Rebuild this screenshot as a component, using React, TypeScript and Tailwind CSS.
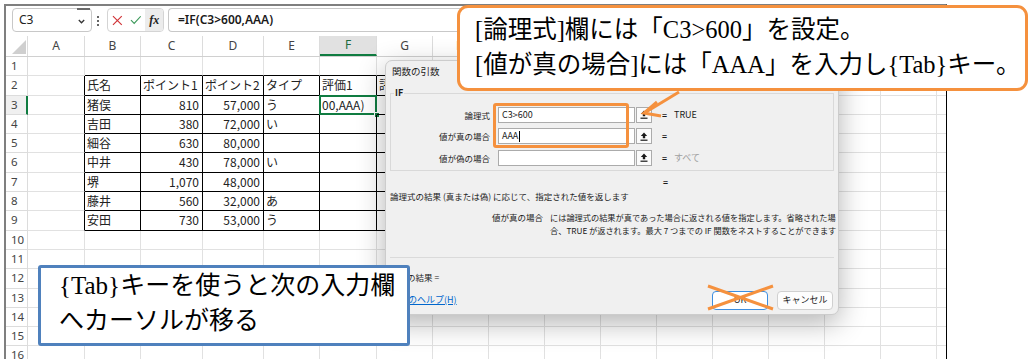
import clsx from 'clsx'

const cols = [
  { key: 'A', w: 'w-[57px]' },
  { key: 'B', w: 'w-[56px]' },
  { key: 'C', w: 'w-[62px]' },
  { key: 'D', w: 'w-[61px]' },
  { key: 'E', w: 'w-[56px]' },
  { key: 'F', w: 'w-[57px]' },
  { key: 'G', w: 'w-[56px]' },
  { key: 'H', w: 'w-[56px]' },
  { key: 'I', w: 'w-[56px]' },
  { key: 'J', w: 'w-[56px]' },
  { key: 'K', w: 'w-[56px]' },
  { key: 'L', w: 'w-[56px]' },
  { key: 'M', w: 'w-[56px]' },
  { key: 'N', w: 'w-[56px]' },
  { key: 'O', w: 'w-[56px]' },
  { key: 'P', w: 'w-[56px]' },
  { key: 'Q', w: 'w-[56px]' },
]

// B..G, rows 2-9
const data: Record<number, string[]> = {
  2: ['氏名', 'ポイント1', 'ポイント2', 'タイプ', '評価1', '評価2'],
  3: ['猪俣', '810', '57,000', 'う', '00,AAA)', ''],
  4: ['吉田', '380', '72,000', 'い', '', ''],
  5: ['細谷', '630', '80,000', '', '', ''],
  6: ['中井', '430', '78,000', 'い', '', ''],
  7: ['堺', '1,070', '48,000', '', '', ''],
  8: ['藤井', '560', '32,000', 'あ', '', ''],
  9: ['安田', '730', '53,000', 'う', '', ''],
}

const rows = Array.from({ length: 16 }, (_, i) => i + 1)

function inTable(row: number, col: number) {
  return row >= 2 && row <= 9 && col >= 1 && col <= 6
}

function UploadIcon() {
  return (
    <svg width="8" height="9" viewBox="0 0 8 9">
      <path d="M4 0.5 L0.8 4 H2.8 V6.2 H5.2 V4 H7.2 Z" fill="#1a1a1a" />
      <rect x="0.5" y="7.6" width="7" height="1.2" fill="#1a1a1a" />
    </svg>
  )
}

function ArgRow({ label, value, result, muted, caret }: { label: string; value: string; result: string; muted?: boolean; caret?: boolean }) {
  return (
    <div className="flex h-[21.5px] items-center">
      <div className="w-[99px] text-right">{label}</div>
      <div className="ml-[8px] flex h-[16px] w-[137px] items-center border border-[#ababab] bg-white pl-[3px] text-[9px]">
        {value}
        {caret && <span className="ml-px inline-block h-[11px] w-px bg-black" />}
      </div>
      <div className="ml-px flex h-[16px] w-[16px] items-center justify-center border border-[#ababab] bg-[#fbfbfb]">
        <UploadIcon />
      </div>
      <div className="ml-[10px] w-[8px] font-bold">=</div>
      <div className={clsx('ml-[4px] text-[9px]', muted ? 'text-[#a0a0a0]' : 'text-[#1b1b1b]')}>{result}</div>
    </div>
  )
}

export default function App() {
  return (
    <div className="relative h-[359px] w-[1030px] overflow-hidden bg-white font-['Noto_Sans_CJK_JP',sans-serif]">
      <div className="ml-[4px] mt-[4px] h-[355px] w-[943px] overflow-hidden border-l-2 border-r border-t-2 border-l-[#7f7f7f] border-r-black border-t-[#7f7f7f]">
        {/* formula bar */}
        <div className="flex h-[30px] items-start pt-[2px]">
          <div className="relative ml-[6px] flex h-[24px] w-[80px] shrink-0 items-center rounded-[4px] border border-[#c8c8c8] pl-[6px] font-['Noto_Sans',sans-serif] text-[12px] text-[#222]">
            C3
            <span className="absolute right-[1px] top-[-1px] h-[2px] w-[13px] bg-[#6a6a6a]" />
            <svg className="absolute right-[6px] top-[10px]" width="7" height="5" viewBox="0 0 7 5">
              <path d="M0.8 1 L3.5 3.8 L6.2 1" fill="none" stroke="#333" strokeWidth="1.3" />
            </svg>
          </div>
          <div className="ml-[5px] flex shrink-0 flex-col gap-[2px] pt-[8px]">
            <span className="h-[2px] w-[2px] rounded-full bg-[#333]" />
            <span className="h-[2px] w-[2px] rounded-full bg-[#333]" />
            <span className="h-[2px] w-[2px] rounded-full bg-[#333]" />
          </div>
          <div className="ml-[8px] flex h-[24px] w-[57px] shrink-0 items-center rounded-[4px] border border-[#d4d4d4]">
            <svg className="ml-[4px]" width="11" height="11" viewBox="0 0 11 11">
              <path d="M1 1 L10 10 M10 1 L1 10" stroke="#d13438" strokeWidth="1.2" />
            </svg>
            <svg className="ml-[7px]" width="12" height="10" viewBox="0 0 12 10">
              <path d="M1 5.2 L4.3 8.6 L11 1.2" fill="none" stroke="#3d9a5b" strokeWidth="1.2" />
            </svg>
            <div className="ml-[4px] flex h-[22px] w-[18px] items-center justify-center rounded-r-[3px] bg-[#ececec] font-['Liberation_Serif',serif] text-[12px] font-bold italic text-[#222]">
              fx
            </div>
          </div>
          <div className="ml-[4px] flex h-[24px] flex-1 items-center rounded-l-[4px] border border-r-0 border-[#c8c8c8] pl-[9px] font-['Noto_Sans',sans-serif] text-[12px] font-semibold text-[#1a1a1a]">
            =IF(C3&gt;600,AAA)
          </div>
        </div>

        {/* column headers */}
        <div className="flex h-[21px] border-b border-[#d0d0d0] font-['Noto_Sans',sans-serif] text-[12px] text-[#444]">
          <div className="relative w-[22px] shrink-0 border-r border-[#dcdcdc]">
            <svg className="absolute bottom-[2px] right-[1px]" width="14" height="14" viewBox="0 0 14 14">
              <path d="M14 0 L14 14 L0 14 Z" fill="#cfcfcf" />
            </svg>
          </div>
          {cols.map(c => (
            <div
              key={c.key}
              className={clsx(
                'flex shrink-0 items-center justify-center border-r border-[#dcdcdc]',
                c.w,
                c.key === 'F' && 'border-b-2 border-b-[#107c41] bg-[#e1e1e1] text-[#1d6b3e]'
              )}
            >
              {c.key}
            </div>
          ))}
        </div>

        {/* rows */}
        {rows.map(r => (
          <div key={r} className="flex h-[19.3px] text-[12px] text-[#222]">
            <div
              className={clsx(
                'w-[22px] shrink-0 border-b border-b-[#dcdcdc] pl-[5px] font-["Noto_Sans",sans-serif] text-[11.5px] leading-[18px] text-[#444]',
                r === 3 ? 'border-r-2 border-r-[#107c41] bg-[#f0f0f0]' : 'border-r border-r-[#dcdcdc]'
              )}
            >
              {r}
            </div>
            {cols.map((c, ci) => {
              const table = inTable(r, ci)
              const blackRight = table || (ci === 0 && r >= 2 && r <= 9)
              const blackBottom = table || (r === 1 && ci >= 1 && ci <= 6)
              const text = table ? data[r][ci - 1] : ''
              const right = r >= 3 && (ci === 2 || ci === 3)
              const active = r === 3 && ci === 5
              return (
                <div
                  key={c.key}
                  className={clsx(
                    'relative shrink-0 overflow-visible whitespace-nowrap border-b border-r leading-[18px]',
                    c.w,
                    blackRight ? 'border-r-black' : 'border-r-[#e1e1e1]',
                    blackBottom ? 'border-b-black' : 'border-b-[#e1e1e1]',
                    right ? 'pr-[3px] text-right' : 'pl-[2px]'
                  )}
                >
                  {text}
                  {active && (
                    <>
                      <div className="absolute -left-px -top-px bottom-[-1px] right-[-1px] border-2 border-[#107c41]" />
                      <div className="absolute bottom-[-4px] right-[-4px] h-[6px] w-[6px] border border-white bg-[#107c41]" />
                    </>
                  )}
                </div>
              )
            })}
          </div>
        ))}
      </div>

      {/* function arguments dialog */}
      <div className="absolute left-[385px] top-[60px] h-[255px] w-[454px] rounded-[7px] border border-[#cccccc] bg-[#f0f0f0] text-[8.5px] leading-[12px] text-[#1b1b1b] shadow-[0_8px_28px_rgba(0,0,0,0.3)]">
        <div className="h-[22px] pl-[6px] pt-[4px] text-[9.5px]">関数の引数</div>
        <fieldset className="mx-[4px] mt-[4px] border border-[#d9d9d9] pb-[1px] pt-[5px]">
          <legend className="ml-[3px] px-[1px] text-[9px] font-bold">IF</legend>
          <ArgRow label="論理式" value="C3>600" result="TRUE" />
          <ArgRow label="値が真の場合" value="AAA" result="" caret />
          <ArgRow label="値が偽の場合" value="" result="すべて" muted />
        </fieldset>
        <div className="mt-[5px] h-[12px] pl-[277px] font-bold">=</div>
        <div className="mt-[2px] pl-[4px]">論理式の結果 (真または偽) に応じて、指定された値を返します</div>
        <div className="mt-[9px] flex leading-[13px]">
          <div className="w-[157px] shrink-0 text-right">値が真の場合</div>
          <div className="ml-[7px] whitespace-nowrap text-[8.2px]">
            には論理式の結果が真であった場合に返される値を指定します。省略された場
            <br />
            合、TRUE が返されます。最大 7 つまでの IF 関数をネストすることができます
          </div>
        </div>
        <div className="mx-[4px] mt-[20px] border-t border-[#dadada]" />
        <div className="mt-[13px] pl-[4px]">数式の結果 =</div>
        <div className="mt-[8px] flex items-center justify-between pl-[4px] pr-[5px]">
          <span className="text-[9px] text-[#0066cc] underline">関数のヘルプ(H)</span>
          <div className="flex gap-[9px]">
            <div className="flex h-[19px] w-[56px] items-center justify-center rounded-[4px] border-[1.5px] border-[#3d8ee0] bg-white text-[9px]">OK</div>
            <div className="flex h-[19px] w-[56px] items-center justify-center rounded-[4px] border border-[#d0d0d0] bg-[#fdfdfd] text-[9px]">キャンセル</div>
          </div>
        </div>
      </div>

      {/* highlight around the inputs */}
      <div className="absolute left-[493px] top-[103px] h-[45px] w-[136px] rounded-[3px] border-[3px] border-[#f5913e]" />

      {/* top callout */}
      <div className="absolute left-[457px] top-[5px] h-[86px] w-[571px] whitespace-nowrap rounded-[11px] border-[3px] border-[#f5913e] bg-white pl-[15px] pt-[4px] font-['Liberation_Serif','Noto_Sans_CJK_JP',serif] text-[24.5px] leading-[35px] text-black">
        [論理式]欄には「C3&gt;600」を設定。
        <br />
        [値が真の場合]には「AAA」を入力し{'{Tab}'}キー。
      </div>

      {/* bottom callout */}
      <div className="absolute left-[38px] top-[265px] h-[81px] w-[372px] whitespace-nowrap rounded-[3px] border-[3px] border-[#4f81bd] bg-white pl-[18px] font-['Liberation_Serif','Noto_Sans_CJK_JP',serif] text-[25px] leading-[35px] text-black">
        {'{Tab}'}キーを使うと次の入力欄
        <br />
        へカーソルが移る
      </div>

      {/* arrow + cross-out */}
      <svg className="pointer-events-none absolute left-0 top-0" width="1030" height="359" viewBox="0 0 1030 359">
        <path d="M679 92 L646 112" stroke="#f5913e" strokeWidth="3" />
        <path d="M657 102 L644 113 L661 116" fill="none" stroke="#f5913e" strokeWidth="3" />
        <path d="M708 286 L773 309 M708 309 L773 286" stroke="#f5913e" strokeWidth="3" />
      </svg>
    </div>
  )
}
